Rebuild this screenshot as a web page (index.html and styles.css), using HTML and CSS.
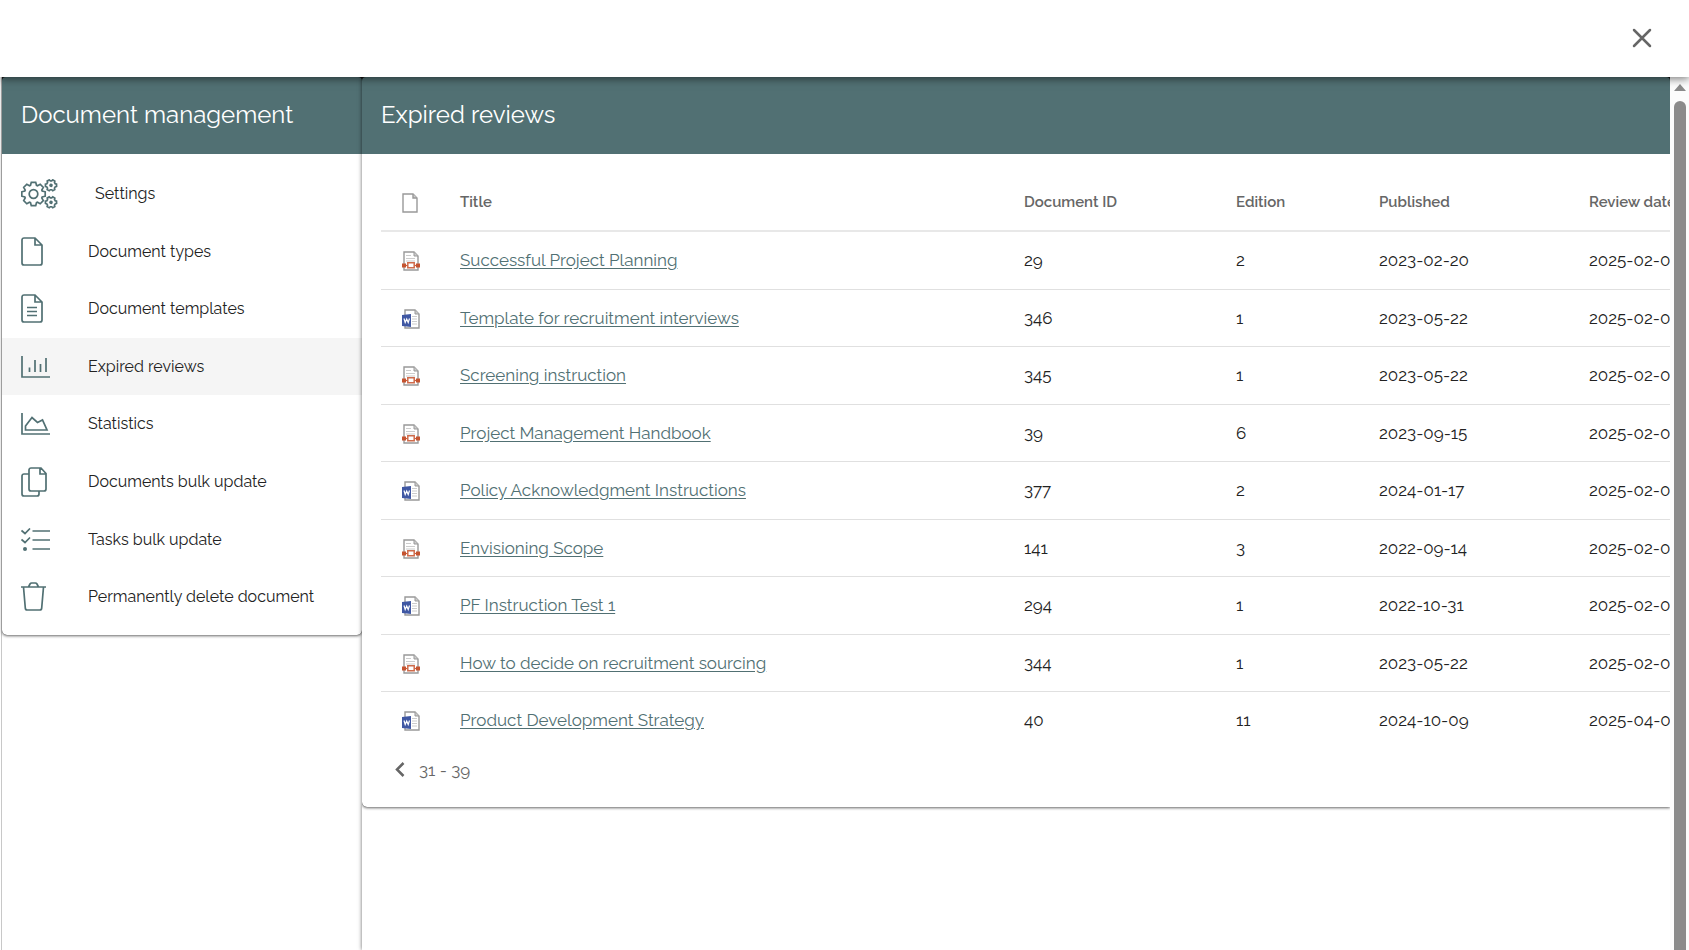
FILE: index.html
```html
<!DOCTYPE html>
<html lang="en">
<head>
<meta charset="utf-8">
<title>Document management</title>
<link rel="stylesheet" href="styles.css">
</head>
<body>
<svg class="sprite" aria-hidden="true">
  <symbol id="file" viewBox="0 0 22 29"><path d="M3 1h11l7 7v18a2 2 0 0 1-2 2H3a2 2 0 0 1-2-2V3a2 2 0 0 1 2-2zM14 1v7h7"/></symbol>
  <symbol id="gear-s" viewBox="-7 -7 14 14" overflow="visible"><path d="M-1.6-4.2-1.2-5.6H1.2L1.6-4.2 2.8-3.5 4.2-3.8 5.4-1.8 4.4-.7V.7L5.4 1.8 4.2 3.8 2.8 3.5 1.6 4.2 1.2 5.6H-1.2L-1.6 4.2-2.8 3.5-4.2 3.8-5.4 1.8-4.4.7V-.7L-5.4-1.8-4.2-3.8-2.8-3.5z"/></symbol>
  <symbol id="flow" viewBox="0 0 18 20">
    <path d="M2 1h10l4 4v14H2z" fill="#fff" stroke="#999" stroke-width="1.4"/><path d="M12 1v4h4" fill="#ccc" stroke="#999"/>
    <path d="M4 4.5h5M4 7.5h9M4 10h9" stroke="#ccc" stroke-width="1"/>
    <path d="M2 14.5h14" stroke="#c8613f" stroke-width="1.2"/><path d="M0 12.5h4v4H0zM14 12.5h4v4h-4z" fill="#c5532f"/>
    <path d="M5.8 11.8h6.4v5H5.8z" fill="#fff" stroke="#cf6b4b" stroke-width="1.5"/>
  </symbol>
  <symbol id="word" viewBox="0 0 18 20">
    <path d="M3 1h10l4 4v14H3z" fill="#fff" stroke="#999" stroke-width="1.4"/><path d="M13 1v4h4" fill="#ccc" stroke="#999"/>
    <path d="M10 7.5h5M10 10h5M10 12.500h5M10 15h5" stroke="#ccc"/>
    <path d="M0 6l9-1v13l-9-1z" fill="#3f57a3"/><path d="M2 9.500l1.200 4 1.500-3.500L6.200 13.500 7.500 9.500" fill="none" stroke="#fff" stroke-width="1.200"/>
  </symbol>
</svg>

<header class="topbar">
  <button class="close" type="button" aria-label="Close"><svg width="20" height="20" viewBox="0 0 20 20"><path d="M2 2l16 16M18 2L2 18"/></svg></button>
</header>

<div class="frame">
  <aside class="side">
    <div class="card">
      <div class="head"><h2>Document management</h2></div>
      <nav>
        <a href="#" class="wide"><svg width="37" height="30" viewBox="0 0 37 30"><g transform="translate(12.500 15)"><path d="M-3-8.700-2.200-11.700H2.200L3-8.700 4-8.300 6.700-9.800 9.800-6.700 8.300-4 8.700-3 11.700-2.200V2.200L8.700 3 8.300 4 9.800 6.700 6.700 9.800 4 8.300 3 8.700 2.200 11.700H-2.200L-3 8.700-4 8.300-6.700 9.800-9.800 6.700-8.300 4-8.700 3-11.700 2.200V-2.200L-8.700-3-8.300-4-9.800-6.700-6.700-9.800-4-8.300z"/><circle r="4.300"/></g><g transform="translate(30 6.300) rotate(30)"><use href="#gear-s" x="-7" y="-7" width="14" height="14"/><circle class="dot" r="1.800"/></g><g transform="translate(30 23.300) rotate(30)"><use href="#gear-s" x="-7" y="-7" width="14" height="14"/><circle class="dot" r="1.800"/></g></svg><span>Settings</span></a>
        <a href="#"><svg width="22" height="29"><use href="#file"/></svg><span>Document types</span></a>
        <a href="#"><svg width="22" height="29" viewBox="0 0 22 29"><use href="#file"/><path d="M6 13.500h10M6 17.500h10M6 21.500h10"/></svg><span>Document templates</span></a>
        <a href="#" class="current" aria-current="page"><svg width="29" height="22" viewBox="0 0 29 22"><path d="M1 0v21h28M8.500 11.500V16M14 4v12M19.500 8v8M25 2v14"/></svg><span>Expired reviews</span></a>
        <a href="#"><svg width="29" height="22" viewBox="0 0 29 22"><path d="M1 0v21h28M4.500 17v-4l6.500-8.500 5.500 5L21.500 7 26 17z"/></svg><span>Statistics</span></a>
        <a href="#"><svg width="26" height="30" viewBox="0 0 26 30"><path d="M8 7H3a2 2 0 0 0-2 2v18a2 2 0 0 0 2 2h13a2 2 0 0 0 2-2v-3M10 1h10l5 5.500V22a2 2 0 0 1-2 2H10a2 2 0 0 1-2-2V3a2 2 0 0 1 2-2zM19 1v6h6"/></svg><span>Documents bulk update</span></a>
        <a href="#"><svg width="29" height="23" viewBox="0 0 29 23"><path d="M.500 2.500l3.500 3L9 .500M.500 11.500l3.500 3 5-5M11.500 3H29M11.500 12H29M11.500 21H29"/><circle class="dot" cx="4" cy="21" r="2"/></svg><span>Tasks bulk update</span></a>
        <a href="#"><svg width="25" height="29" viewBox="0 0 25 29"><path d="M0 5h25M2.500 5l1.800 21a2 2 0 0 0 2 2h12.400a2 2 0 0 0 2-2L22.500 5M7.500 5l1.500-3a2 2 0 0 1 1.800-1h3.400A2 2 0 0 1 16 2l1.500 3"/></svg><span>Permanently delete document</span></a>
      </nav>
    </div>
  </aside>

  <main class="content">
    <div class="card">
      <div class="head"><h1>Expired reviews</h1></div>
      <div class="listing">
        <table>
          <colgroup><col class="c-icon"><col><col class="c-id"><col class="c-edition"><col class="c-published"><col class="c-review"></colgroup>
          <thead>
            <tr><th scope="col" aria-label="Type"><svg width="16" height="20" viewBox="0 0 16 20" fill="#fff" stroke="#999" stroke-width="1.400"><path d="M1 1h10l4 4v14H1z"/><path d="M11 1v4h4" fill="#ccc"/></svg></th><th scope="col">Title</th><th scope="col">Document ID</th><th scope="col">Edition</th><th scope="col">Published</th><th scope="col">Review date</th></tr>
          </thead>
          <tbody>
            <tr><td><svg width="18" height="20"><use href="#flow"/></svg></td><td><a href="#">Successful Project Planning</a></td><td>29</td><td>2</td><td>2023-02-20</td><td>2025-02-0</td></tr>
            <tr><td><svg width="18" height="20"><use href="#word"/></svg></td><td><a href="#">Template for recruitment interviews</a></td><td>346</td><td>1</td><td>2023-05-22</td><td>2025-02-0</td></tr>
            <tr><td><svg width="18" height="20"><use href="#flow"/></svg></td><td><a href="#">Screening instruction</a></td><td>345</td><td>1</td><td>2023-05-22</td><td>2025-02-0</td></tr>
            <tr><td><svg width="18" height="20"><use href="#flow"/></svg></td><td><a href="#">Project Management Handbook</a></td><td>39</td><td>6</td><td>2023-09-15</td><td>2025-02-0</td></tr>
            <tr><td><svg width="18" height="20"><use href="#word"/></svg></td><td><a href="#">Policy Acknowledgment Instructions</a></td><td>377</td><td>2</td><td>2024-01-17</td><td>2025-02-0</td></tr>
            <tr><td><svg width="18" height="20"><use href="#flow"/></svg></td><td><a href="#">Envisioning Scope</a></td><td>141</td><td>3</td><td>2022-09-14</td><td>2025-02-0</td></tr>
            <tr><td><svg width="18" height="20"><use href="#word"/></svg></td><td><a href="#">PF Instruction Test 1</a></td><td>294</td><td>1</td><td>2022-10-31</td><td>2025-02-0</td></tr>
            <tr><td><svg width="18" height="20"><use href="#flow"/></svg></td><td><a href="#">How to decide on recruitment sourcing</a></td><td>344</td><td>1</td><td>2023-05-22</td><td>2025-02-0</td></tr>
            <tr><td><svg width="18" height="20"><use href="#word"/></svg></td><td><a href="#">Product Development Strategy</a></td><td>40</td><td>11</td><td>2024-10-09</td><td>2025-04-0</td></tr>
          </tbody>
        </table>
        <div class="pager">
          <button type="button" aria-label="Previous page"><svg width="10" height="15" viewBox="0 0 10 15"><path d="M8.500 1L2 7.500 8.500 14"/></svg></button>
          <span>31 - 39</span>
        </div>
      </div>
    </div>
  </main>

  <div class="scrollbar" aria-hidden="true"><div class="arrow"></div><div class="thumb"></div></div>
</div>
</body>
</html>
```

FILE: styles.css
```css
* { box-sizing: border-box; }

body {
  margin: 0;
  height: 100vh;
  display: flex;
  flex-direction: column;
  overflow: hidden;
  background: #fff;
  color: #222;
  font-family: Raleway, "Open Sans", sans-serif;
  font-size: 16px;
  line-height: 1.6;
}

.sprite { position: absolute; width: 0; height: 0; }

button { border: 0; background: none; padding: 0; cursor: pointer; display: flex; }

.topbar {
  position: relative;
  z-index: 2;
  flex: none;
  display: flex;
  justify-content: flex-end;
  padding: 28px 37px 29px;
  background: #fff;
  box-shadow: 0 2px 8px rgba(0, 0, 0, .5);
}
.close svg { stroke: #666; stroke-width: 2.5; stroke-linecap: round; }

.frame {
  flex: 1;
  min-height: 0;
  display: flex;
  margin-left: 1px;
  border-left: 1px solid #c8c8c8;
}

.side { flex: none; width: 360px; }

.content {
  position: relative;
  flex: 1;
  min-width: 0;
  box-shadow: 0 0 4px rgba(0, 0, 0, .6);
  background: #fff;
  overflow: hidden;
}

.card {
  background: #111;
  border-radius: 0 0 5px 5px;
  box-shadow: 0 1px 3px rgba(0, 0, 0, .6);
}
.content .card { border-bottom-right-radius: 0; }

.head {
  padding: 19px 19px 20px;
  background: #517073;
  color: #fff;
  border-radius: 4px 4px 0 0;
}
h1, h2 {
  margin: 0;
  font-size: 24px;
  line-height: 38px;
  font-weight: 400;
}

nav {
  display: flex;
  flex-direction: column;
  padding: 11px 0 9px;
  background: #fff;
  border-radius: 0 0 5px 5px;
}
nav a {
  display: grid;
  grid-template-columns: 67px 1fr;
  align-items: center;
  padding: 16px 19px;
  color: #222;
  text-decoration: none;
}
nav a.wide { grid-template-columns: 74px 1fr; }
nav a.current { background: #f5f5f5; }
nav svg {
  margin: -3px 0;
  fill: none;
  stroke: #517073;
  stroke-width: 1.7;
}
nav .dot { fill: #517073; stroke: none; }

.listing {
  padding: 19px 0 21px 19px;
  background: #fff;
  border-radius: 0 0 0 5px;
}

table {
  width: calc(100% + 39px);
  table-layout: fixed;
  border-collapse: separate;
  border-spacing: 0;
}
.c-icon { width: 79px; }
.c-id { width: 212px; }
.c-edition { width: 143px; }
.c-published { width: 210px; }
.c-review { width: 120px; }

th, td {
  padding: 15px 0;
  border-bottom: 1px solid #e0e0e0;
  text-align: left;
  vertical-align: middle;
  white-space: nowrap;
}
th {
  padding: 16px 0 15px;
  border-bottom-width: 2px;
  border-bottom-color: #e8e8e8;
  color: #666;
  font-size: 15px;
  line-height: 26px;
  font-weight: 600;
}
td {
  font-size: 17px;
  line-height: 1.56;
}
tbody tr:last-child td { border-bottom-color: transparent; }
th:first-child, td:first-child { padding-left: 21px; }
th svg, td svg { display: block; margin-top: 2px; }
td a { color: #517073; text-underline-offset: 2px; }

.pager {
  display: flex;
  align-items: center;
  gap: 14px;
  padding: 7px 14px 3px;
  color: #666;
  font-size: 17px;
  line-height: 26px;
}
.pager svg { fill: none; stroke: #666; stroke-width: 2.5; }

.scrollbar {
  position: relative;
  flex: none;
  width: 19px;
  display: flex;
  flex-direction: column;
  align-items: center;
  gap: 10px;
  padding: 7px 0 0 1px;
  background: #fcfcfc;
}
.arrow {
  width: 12px;
  height: 7px;
  background: #8b8b8b;
  clip-path: polygon(50% 0, 100% 100%, 0 100%);
}
.thumb {
  flex: 1;
  width: 12px;
  border-radius: 6px 6px 0 0;
  background: #8b8b8b;
}
```
